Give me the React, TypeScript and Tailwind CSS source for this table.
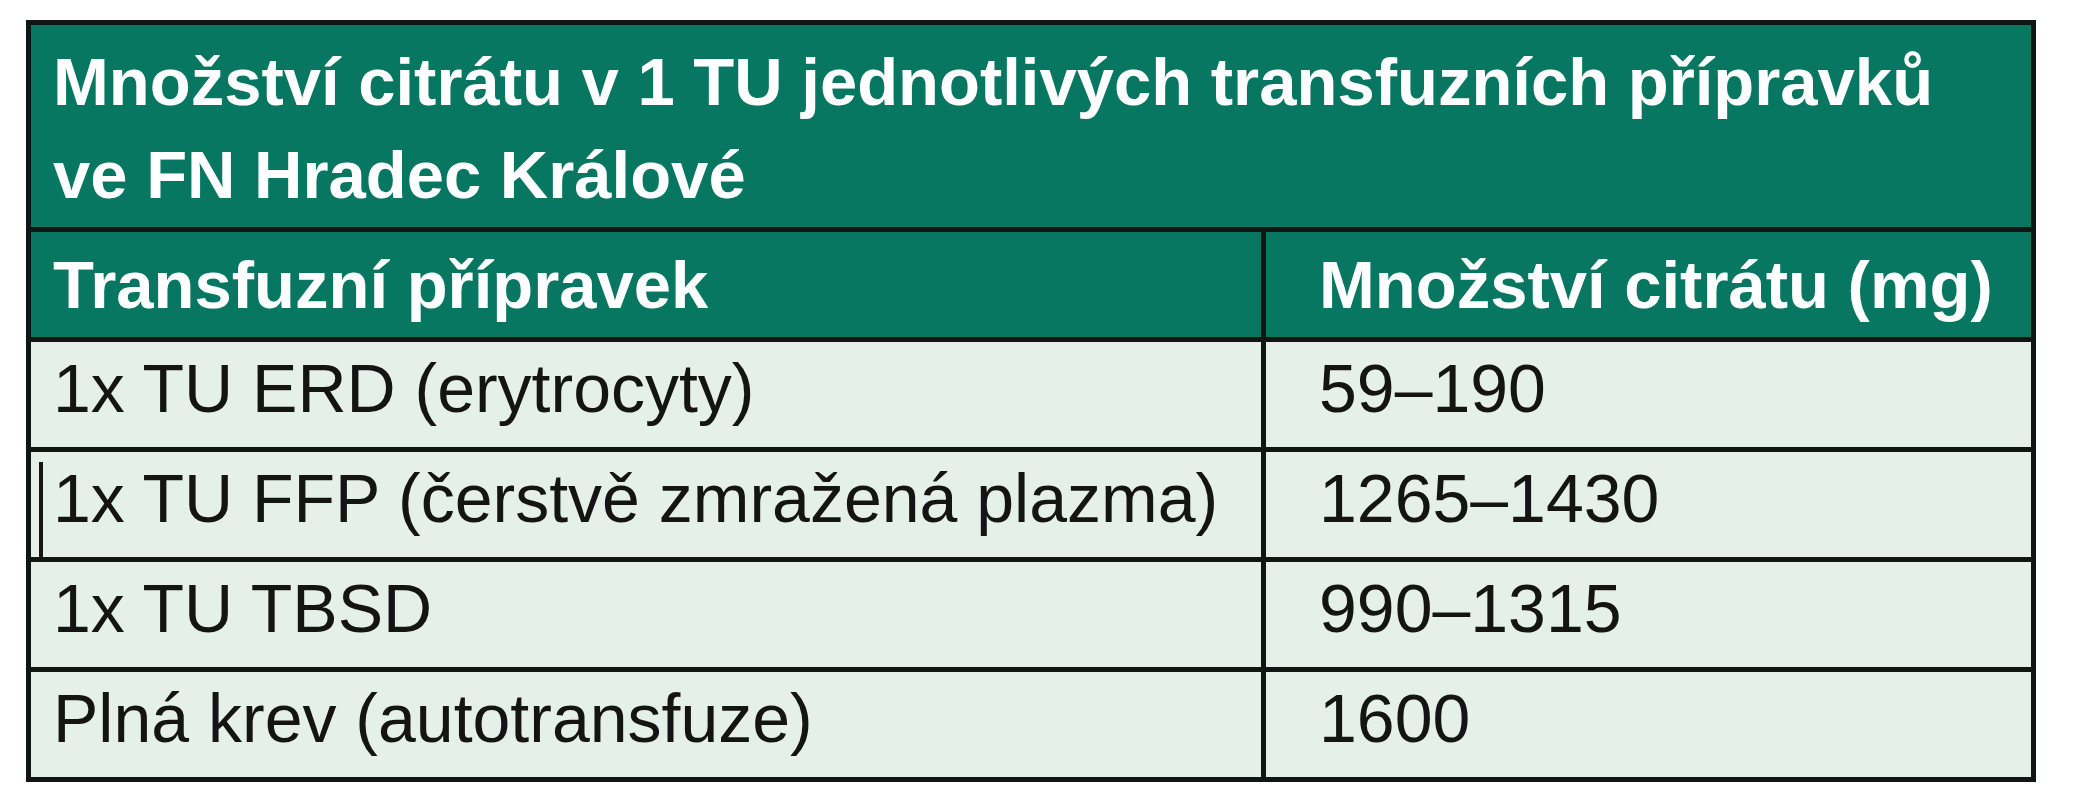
const rows = [
  { name: '1x TU ERD (erytrocyty)', amount: '59–190' },
  { name: '1x TU FFP (čerstvě zmražená plazma)', amount: '1265–1430', mark: true },
  { name: '1x TU TBSD', amount: '990–1315' },
  { name: 'Plná krev (autotransfuze)', amount: '1600' },
];

export default function App() {
  return (
    <div className="min-h-[800px] w-[2084px] bg-white pl-[26px] pt-[20px] font-['Liberation_Sans',Arial,sans-serif]">
      <div className="w-[2010px] border-[5px] border-[#0f1613]">
        {/* Caption */}
        <div className="h-[202px] bg-[#087762] pl-[22px] pt-[10px] text-[67px] font-bold leading-[93px] text-white">
          <div>Množství citrátu v 1 TU jednotlivých transfuzních přípravků</div>
          <div>ve FN Hradec Králové</div>
        </div>

        {/* Column headings */}
        <div className="flex h-[110px] border-t-[5px] border-[#0f1613] bg-[#087762] text-[67px] font-bold leading-none text-white">
          <div className="flex w-[1230px] items-center pl-[22px]">Transfuzní přípravek</div>
          <div className="flex flex-1 items-center border-l-[5px] border-[#0f1613] pl-[53px]">
            Množství citrátu (mg)
          </div>
        </div>

        {/* Body */}
        {rows.map((r) => (
          <div
            key={r.name}
            className="flex h-[110px] border-t-[5px] border-[#0f1613] bg-[#e5f0ea] text-[68px] leading-none text-[#141414]"
          >
            <div className="relative flex w-[1230px] items-center pb-[14px] pl-[22px]">
              {r.mark && <span className="absolute bottom-0 left-[8px] top-[10px] w-[4px] bg-[#1a1414]" />}
              {r.name}
            </div>
            <div className="flex flex-1 items-center border-l-[5px] border-[#0f1613] pb-[14px] pl-[53px]">
              {r.amount}
            </div>
          </div>
        ))}
      </div>
    </div>
  );
}
